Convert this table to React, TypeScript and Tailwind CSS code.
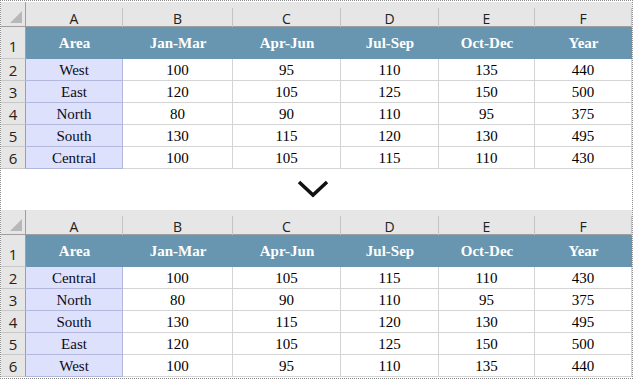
import React from 'react';

type Row = [string, number, number, number, number, number];

const firstRows: Row[] = [
  ['West', 100, 95, 110, 135, 440],
  ['East', 120, 105, 125, 150, 500],
  ['North', 80, 90, 110, 95, 375],
  ['South', 130, 115, 120, 130, 495],
  ['Central', 100, 105, 115, 110, 430],
];

const sortedRows: Row[] = [
  ['Central', 100, 105, 115, 110, 430],
  ['North', 80, 90, 110, 95, 375],
  ['South', 130, 115, 120, 130, 495],
  ['East', 120, 105, 125, 150, 500],
  ['West', 100, 95, 110, 135, 440],
];

const letters = ['A', 'B', 'C', 'D', 'E', 'F'];
const headers = ['Area', 'Jan-Mar', 'Apr-Jun', 'Jul-Sep', 'Oct-Dec', 'Year'];

const Sheet = ({ rows }: { rows: Row[] }) => {
  return (
    <div className="grid grid-cols-[25px_97px_110px_108px_98px_96px_97px] grid-rows-[25px_32px_repeat(5,22px)]">
      {/* corner */}
      <div className="bg-[#e6e6e6] border-r border-b border-[#9f9f9f] flex items-end justify-end pr-[3px] pb-[3px]">
        <svg width="12" height="12" viewBox="0 0 12 12">
          <polygon points="12,0 12,12 0,12" fill="#b8b8b8" />
        </svg>
      </div>
      {letters.map((l) => (
        <div key={l} className="bg-[#e6e6e6] border-b border-[#9f9f9f] flex flex-col">
          <div className="flex-1 mt-[6px] border-r border-[#c4c4c4] flex items-center justify-center pb-[1px] text-[14px] text-[#222] font-['Open_Sans',sans-serif]">
            {l}
          </div>
        </div>
      ))}

      {/* header row */}
      <div className="bg-[#e6e6e6] border-r border-b border-[#9f9f9f] border-b-[#c8c8c8] flex items-end justify-center pb-[1px] text-[15px] text-[#222] font-['Open_Sans',sans-serif]">
        1
      </div>
      {headers.map((h) => (
        <div
          key={h}
          className="bg-[#6896b0] flex items-center justify-center text-white font-bold text-[15px] font-['Liberation_Serif',serif]"
        >
          {h}
        </div>
      ))}

      {rows.map((r, i) => (
        <React.Fragment key={r[0]}>
          <div className="bg-[#e6e6e6] border-r border-b border-[#9f9f9f] border-b-[#c8c8c8] flex items-center justify-center pt-[1px] text-[15px] text-[#222] font-['Open_Sans',sans-serif]">
            {i + 2}
          </div>
          <div className="bg-[#dde1fb] border-r border-b border-[#b3b7dd] flex items-center justify-center pt-[2px] text-[15px] text-[#0a0a1e] font-['Liberation_Serif',serif]">
            {r[0]}
          </div>
          {r.slice(1).map((v, j) => (
            <div
              key={j}
              className="bg-white border-r border-b border-[#d4d4d4] flex items-center justify-center pt-[2px] text-[15px] text-black font-['Liberation_Serif',serif]"
            >
              {v}
            </div>
          ))}
        </React.Fragment>
      ))}
    </div>
  );
};

const App = () => {
  return (
    <div className="w-[633px] h-[379px] bg-white border border-dotted border-[#8a8a8a] pt-[1px] flex flex-col overflow-hidden">
      <Sheet rows={firstRows} />
      <div className="h-[41px] flex justify-center pr-[7px] pt-[10px]">
        <svg width="34" height="20" viewBox="0 0 34 20">
          <polyline points="3,3 17,16 31,3" fill="none" stroke="#111" strokeWidth="3.5" />
        </svg>
      </div>
      <Sheet rows={sortedRows} />
    </div>
  );
};

export default App;
